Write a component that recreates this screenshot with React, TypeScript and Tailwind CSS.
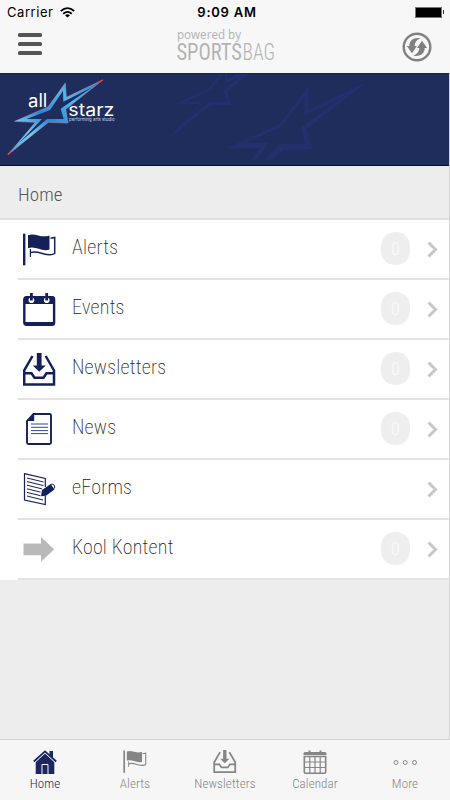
import React from "react";

type IconProps = { className?: string };

const condensed = "font-['Roboto_Condensed','Roboto',sans-serif] [font-stretch:75%] tracking-[0.1px]";

function FlagIcon({ className }: IconProps) {
  return (
    <svg viewBox="0 0 33 34" className={className} fill="none">
      <path d="M0 .7h2.4v31.6H0z" fill="currentColor" />
      <path d="M5 2.2C12-.8 18 5.600 26.500 2.500V16.500C19 19.500 13 12.500 5 15.300z" fill="currentColor" />
      <path d="M27.500 5.300L31.700 4.500V20.500C25 25.500 15 16 7.400 19.700" stroke="currentColor" strokeWidth="1.500" />
      <path d="M7.400 16v8" stroke="currentColor" strokeWidth="1.200" />
    </svg>
  );
}

function EventIcon({ className }: IconProps) {
  return (
    <svg viewBox="0 0 33 34" className={className} fill="none">
      <rect x="1.300" y="4.300" width="29.800" height="27.400" rx="2" stroke="currentColor" strokeWidth="2.400" />
      <path d="M2 3.800h28.500V11H2zM2 29h28.500v3H2z" fill="currentColor" />
      <circle cx="8.400" cy="7.200" r="2.800" fill="white" />
      <circle cx="23.700" cy="7.200" r="2.800" fill="white" />
      <path d="M7 0h2.800v7.500H7zM22.300 0h2.800v7.500h-2.800z" fill="currentColor" />
    </svg>
  );
}

function InboxIcon({ className }: IconProps) {
  return (
    <svg viewBox="0 0 33 34" className={className} fill="none">
      <path d="M13.800 0h4.800v12.500h4.200L16.200 18.700 9.700 12.500h4.100z" fill="currentColor" />
      <path
        d="M9.500 3L1.200 17.500V31.500H31V17.500L22.700 3M1.200 20.300H8.500L11.500 24.700H20.500L23.500 20.300H31"
        stroke="currentColor"
        strokeWidth="2.500"
      />
    </svg>
  );
}

function NewsIcon({ className }: IconProps) {
  return (
    <svg viewBox="0 0 33 34" className={className} fill="none">
      <path d="M10.500 1H26.500Q28 1 28 2.500V29.500Q28 31 26.500 31H5.500Q4 31 4 29.500V8z" stroke="currentColor" strokeWidth="1.900" />
      <path d="M11.200.500V8H3.500z" fill="currentColor" />
      <path d="M8 11h17M8 14.300h17M8 17.600h17M8 20.600h17" stroke="#344b8a" strokeWidth="1" />
    </svg>
  );
}

function FormIcon({ className }: IconProps) {
  return (
    <svg viewBox="0 0 33 34" className={className} fill="none">
      <path d="M22.300 14V5.500L1.500.600V27L22.300 31.600V23" stroke="currentColor" strokeWidth="1.200" />
      <path
        d="M4 5l16.500 4M4 8.600l16.500 4M4 12.200l15 3.700M4 15.800l13.500 3.300M4 19.400l13.500 3.300M4 23l16 4"
        stroke="currentColor"
        strokeWidth="1"
      />
      <path d="M19 17l8.700-6 3.700 5.500-8.400 6.200-5 .5z" fill="currentColor" />
      <path d="M28 11.300q2-.8 3.200.9t-.3 3.600" stroke="currentColor" strokeWidth="1" />
    </svg>
  );
}

function ArrowIcon({ className }: IconProps) {
  return (
    <svg viewBox="0 0 33 34" className={className}>
      <path d="M.500 10.500H18V4l13.200 12.200L18 28.700V22.200H.500z" fill="#b9b9b9" />
    </svg>
  );
}

function HouseIcon({ className }: IconProps) {
  return (
    <svg viewBox="0 0 24 24" className={className} fill="none">
      <path d="M16.500 1H20v8l-3.500-3z" fill="currentColor" />
      <path d="M12 3.200L21.300 12v12H2.700V12z" fill="currentColor" />
      <path d="M1.300 12.800L12 3.200l10.700 9.600" stroke="#f6f6f6" strokeWidth=".9" />
      <path d="M.800 11.500L12 1.400l11.200 10.100" stroke="currentColor" strokeWidth="1.800" />
      <path d="M9 24v-9.500h6V24" stroke="#f6f6f6" strokeWidth="1" />
    </svg>
  );
}

function CalendarIcon({ className }: IconProps) {
  return (
    <svg viewBox="0 0 24 24" className={className} fill="none">
      <path d="M2 2h20q1.500 0 1.500 1.500V5H.500V3.500Q.500 2 2 2zM5.500.500h2V3h-2zM16.500.500h2V3h-2z" fill="currentColor" />
      <path d="M1.300 6.500H22.700V22Q22.700 23.200 21.500 23.200H2.500Q1.300 23.200 1.300 22z" stroke="currentColor" strokeWidth="1.600" />
      <path d="M1 12h22M1 17.500h22M6.800 6v17M12 6v17M17.200 6v17" stroke="currentColor" strokeWidth="1.200" />
    </svg>
  );
}

function MoreIcon({ className }: IconProps) {
  return (
    <svg viewBox="0 0 24 24" className={className} fill="none" stroke="currentColor" strokeWidth="1">
      <circle cx="3" cy="12.500" r="2" />
      <circle cx="12.200" cy="12.500" r="2" />
      <circle cx="21.500" cy="12.500" r="2" />
    </svg>
  );
}

function RefreshIcon({ className }: IconProps) {
  return (
    <svg viewBox="0 0 30 30" className={className} fill="#808080">
      <circle cx="15" cy="15" r="13.300" fill="none" stroke="#808080" strokeWidth="2.400" />
      <path d="M18.500 6.300C11.500 5.200 7.300 8.500 7.300 14H4.800L10 21.300 15 14H12.600C12.800 10.500 14.800 7.800 18.500 6.300z" />
      <path d="M11.500 23.700C18.500 24.800 22.700 21.500 22.700 16H25.200L20 8.700 15 16H17.400C17.200 19.500 15.200 22.200 11.500 23.700z" />
    </svg>
  );
}

const menuItems = [
  { title: "Alerts", icon: FlagIcon, count: 0 },
  { title: "Events", icon: EventIcon, count: 0 },
  { title: "Newsletters", icon: InboxIcon, count: 0 },
  { title: "News", icon: NewsIcon, count: 0 },
  { title: "eForms", icon: FormIcon },
  { title: "Kool Kontent", icon: ArrowIcon, count: 0 },
];

const tabs = [
  { title: "Home", icon: HouseIcon, active: true },
  { title: "Alerts", icon: FlagIcon },
  { title: "Newsletters", icon: InboxIcon },
  { title: "Calendar", icon: CalendarIcon },
  { title: "More", icon: MoreIcon },
];

function StatusBar() {
  return (
    <div className="grid h-6 grid-cols-3 items-center pl-[7px] pr-[6px] font-['Inter',sans-serif] text-[13px] leading-6 text-black">
      <div className="flex items-center gap-[7px]">
        <span className="tracking-[0.55px]">Carrier</span>
        <svg viewBox="0 0 15 11" className="h-[11px] w-[15px]" fill="none" stroke="black" strokeWidth="1.800">
          <path d="M.800 4Q7.500-1.800 14.200 4M3.200 6.700Q7.500 3 11.800 6.700" />
          <path d="M7.500 10.600L5 8.200Q7.500 6.200 10 8.200z" fill="black" stroke="none" />
        </svg>
      </div>
      <span className="whitespace-nowrap pl-[3px] text-center font-semibold tracking-[0.75px]">9:09 AM</span>
      <div className="flex items-center justify-end gap-px">
        <div className="h-[11px] w-[27px] border border-[#777] bg-black" />
        <div className="h-[4px] w-[1px] bg-[#333]" />
      </div>
    </div>
  );
}

function SportsbagLogo({ className }: IconProps) {
  return (
    <svg viewBox="0 0 98 36" className={className} fill="#b3b3b3">
      <text x="0" y="11" fontFamily="Open Sans, sans-serif" fontSize="12" textLength="64" lengthAdjust="spacingAndGlyphs">
        powered by
      </text>
      <g className="font-['Roboto_Condensed','Roboto',sans-serif] text-[23px] [font-stretch:75%]">
        <text x="-.5" y="31.500" textLength="65.500" lengthAdjust="spacingAndGlyphs">SPORTS</text>
        <text x="65.500" y="31.500" textLength="32.500" lengthAdjust="spacingAndGlyphs" className="font-light">BAG</text>
      </g>
    </svg>
  );
}

function Banner() {
  return (
    <div className="h-[93px] shrink-0 border-y border-t-[#14245c] border-b-[#06065a] bg-[#1f2d5c]">
      <svg viewBox="0 12 1350 273" className="h-[91px] w-[450px]">
        <defs>
          <linearGradient id="star" x1="0" y1="1" x2="1" y2="0">
            <stop offset="0" stopColor="#3aa0e8" />
            <stop offset=".25" stopColor="#6fd4fa" />
            <stop offset=".45" stopColor="#2a86da" />
            <stop offset=".7" stopColor="#4fb8f2" />
            <stop offset="1" stopColor="#2f78cc" />
          </linearGradient>
        </defs>
        <g fill="#22316e" fillRule="evenodd">
          <path d="M1100 36L924 120 927 47 840 161 682 234 780 234 752 270 815 270 850 239 938 238 919 178zM1025 83L912 138 916 78 842 172 735 219 805 219 770 270 790 270 840 222 916 222 903 172z" />
          <path d="M748 10L683 65 693 105 634 105 508 204 598 102 525 102 627 56 660 10 682 10 681 27 712 10zM670 10L632 60 558 95 606 95 545 165 628 95 681 95 670 61 715 25 675 40 676 10z" />
        </g>
        <path
          d="M308 30L199 82 196 39 144 111 44 154 106 157 24 254 145 157 204 159 197 118zM276 52L190 95 189 62 150 120 80 147 126 147 58 218 141 147 191 147 182 116z"
          fill="url(#star)"
          fillRule="evenodd"
        />
        <path
          d="M308 30L199 82 196 39 144 111 44 154 106 157 24 254 145 157 204 159 197 118z"
          fill="none"
          stroke="#c08a9c"
          strokeWidth="1.800"
        />
        <path d="M308 30l-14 8M24 254l10-12" stroke="#e0453c" strokeWidth="4" />
        <g fill="white" fontFamily="Inter, sans-serif">
          <text x="84" y="110" fontSize="54" textLength="58" lengthAdjust="spacingAndGlyphs">all</text>
          <text x="205" y="138" fontSize="52" textLength="138" lengthAdjust="spacingAndGlyphs">starz</text>
          <text x="207" y="152" fontSize="15" textLength="137" lengthAdjust="spacingAndGlyphs" fill="#c9cfe4">performing arts studio</text>
        </g>
      </svg>
    </div>
  );
}

export default function App() {
  return (
    <div className="flex h-[800px] w-[450px] flex-col overflow-hidden bg-[#ededed]">
      <header className="h-[73px] shrink-0 bg-[#f7f7f7]">
        <StatusBar />
        <div className="flex h-[49px] items-start justify-between pl-[18px] pr-[18px]">
          <div className="mt-[9px] flex w-6 flex-col gap-[5px]">
            <div className="h-[4px] rounded-[1.500px] bg-[#555]" />
            <div className="h-[4px] rounded-[1.500px] bg-[#555]" />
            <div className="h-[4px] rounded-[1.500px] bg-[#555]" />
          </div>
          <SportsbagLogo className="ml-[8px] mt-[4px] h-[36px] w-[98px] overflow-visible" />
          <RefreshIcon className="mt-[8px] size-[30px]" />
        </div>
      </header>

      <div className="flex min-h-0 flex-1 flex-col border-r border-[#d4d4d4]">
        <Banner />
        <div className={`${condensed} h-[54px] shrink-0 border-b-2 border-[#dfdfdf] pl-[18px] pt-px text-[19px] font-light leading-[55px] text-[#555]`}>
          Home
        </div>
        <ul className="bg-white pl-[18px]">
          {menuItems.map(({ title, icon: Icon, count }) => (
            <li key={title} className="flex h-[60px] items-start border-b-2 border-[#e3e3e3]">
              <Icon className="ml-[5px] mt-[13px] h-[34px] w-[33px] shrink-0 text-[#14205a]" />
              <span className={`${condensed} ml-4 flex-1 whitespace-nowrap text-[20px] font-extralight leading-[55px] tracking-[0.200px] text-[#222]`}>
                {title}
              </span>
              {count !== undefined && (
                <span className={`${condensed} mr-[17px] mt-[12px] h-[33px] w-[29px] rounded-[14px] bg-[#eee] text-center text-[19px] font-light leading-[33px] text-[#fafafa]`}>
                  {count}
                </span>
              )}
              <svg viewBox="0 0 11 17" className="mr-[11px] mt-[21px] h-[17px] w-[11px] shrink-0" fill="none">
                <path d="M1.500 1.500l7 7-7 7" stroke="#c7c7c7" strokeWidth="3" />
              </svg>
            </li>
          ))}
        </ul>
      </div>

      <nav className="grid h-[61px] shrink-0 grid-cols-5 border-t border-[#d2d2d2] bg-[#f6f6f6]">
        {tabs.map(({ title, icon: Icon, active }) => (
          <div key={title} className={`flex flex-col items-center pt-[10px] ${active ? "text-[#1a2760]" : "text-[#858585]"}`}>
            <Icon className="h-6 w-6" />
            <span className={`${condensed} mt-px text-[13px] font-light leading-[18px]`}>{title}</span>
          </div>
        ))}
      </nav>
    </div>
  );
}
